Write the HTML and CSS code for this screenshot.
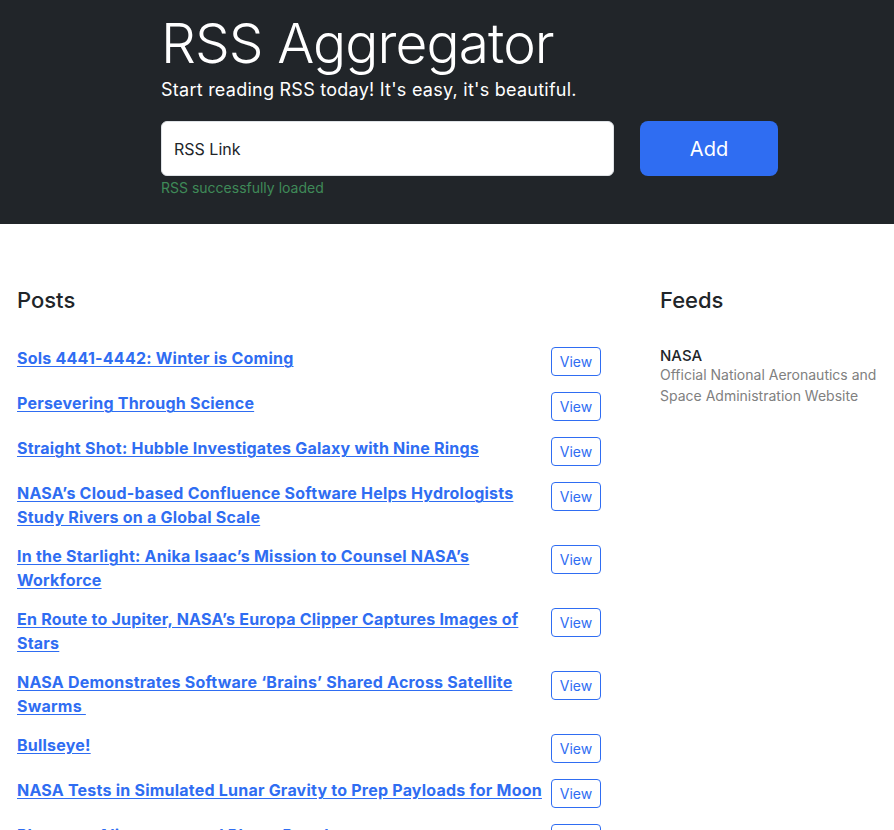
FILE: index.html
```html
<!DOCTYPE html>
<html lang="en">
<head>
<meta charset="utf-8">
<title>RSS Aggregator</title>
<link rel="stylesheet" href="styles.css">
</head>
<body>
<header class="hero">
  <div class="hero-inner">
    <h1 class="title">RSS Aggregator</h1>
    <p class="lead">Start reading RSS today! It's easy, it's beautiful.</p>
    <form class="rss-form">
      <div class="field">
        <input class="input" type="text" placeholder="RSS Link" aria-label="RSS Link">
      </div>
      <button type="button" class="btn-add">Add</button>
    </form>
    <p class="feedback">RSS successfully loaded</p>
  </div>
</header>
<main class="content">
  <section class="posts">
    <h2 class="section-title">Posts</h2>
    <ul class="post-list">
      <li class="post"><a href="#" class="post-link">Sols 4441-4442: Winter is Coming</a><button class="btn-view" type="button">View</button></li>
      <li class="post"><a href="#" class="post-link">Persevering Through Science</a><button class="btn-view" type="button">View</button></li>
      <li class="post"><a href="#" class="post-link">Straight Shot: Hubble Investigates Galaxy with Nine Rings</a><button class="btn-view" type="button">View</button></li>
      <li class="post"><a href="#" class="post-link">NASA’s Cloud-based Confluence Software Helps Hydrologists Study Rivers on a Global Scale</a><button class="btn-view" type="button">View</button></li>
      <li class="post"><a href="#" class="post-link">In the Starlight: Anika Isaac’s Mission to Counsel NASA’s Workforce</a><button class="btn-view" type="button">View</button></li>
      <li class="post"><a href="#" class="post-link">En Route to Jupiter, NASA’s Europa Clipper Captures Images of Stars</a><button class="btn-view" type="button">View</button></li>
      <li class="post"><a href="#" class="post-link">NASA Demonstrates Software ‘Brains’ Shared Across Satellite Swarms&nbsp;</a><button class="btn-view" type="button">View</button></li>
      <li class="post"><a href="#" class="post-link">Bullseye!</a><button class="btn-view" type="button">View</button></li>
      <li class="post"><a href="#" class="post-link">NASA Tests in Simulated Lunar Gravity to Prep Payloads for Moon</a><button class="btn-view" type="button">View</button></li>
      <li class="post"><a href="#" class="post-link">Planetary Alignments and Planet Parades</a><button class="btn-view" type="button">View</button></li>
    </ul>
  </section>
  <aside class="feeds">
    <h2 class="section-title">Feeds</h2>
    <ul class="feed-list">
      <li class="feed">
        <h3 class="feed-title">NASA</h3>
        <p class="feed-desc">Official National Aeronautics and Space Administration Website</p>
      </li>
    </ul>
  </aside>
</main>
</body>
</html>
```
FILE: styles.css
```css
* { box-sizing: border-box; }
html, body { margin: 0; padding: 0; }
body {
  font-family: Inter, "Noto Sans", sans-serif;
  color: #212529;
  background: #fff;
  font-size: 16px;
  line-height: 1.5;
}
.hero {
  background: #212529;
  color: #fff;
  height: 224px;
}
.hero-inner {
  margin-left: 161px;
  width: 617px;
  padding-top: 10px;
}
.title {
  margin: 0;
  font-size: 55px;
  font-weight: 300;
  line-height: 66px;
  letter-spacing: -0.9px;
}
.lead {
  margin: 0 0 18px;
  font-size: 18px;
  font-weight: 400;
  line-height: 27px;
  letter-spacing: 0.25px;
}
.rss-form {
  display: flex;
  gap: 26px;
}
.field { flex: 1; }
.input {
  width: 100%;
  height: 55px;
  border: 1px solid #dee2e6;
  border-radius: 6px;
  padding: 0 12px;
  font: inherit;
  font-size: 16px;
  color: #212529;
  background: #fff;
}
.input::placeholder { color: #212529; }
.btn-add {
  width: 138px;
  height: 55px;
  border: 0;
  border-radius: 8px;
  background: #2f6df2;
  color: #fff;
  font: inherit;
  font-size: 20px;
}
.feedback {
  margin: 2px 0 0;
  font-size: 14px;
  line-height: 20px;
  color: #3f8a58;
}
.content {
  display: flex;
  padding: 0 0 0 17px;
}
.posts {
  width: 584px;
  flex: none;
}
.feeds {
  margin-left: 59px;
  flex: 1;
  padding-right: 8px;
}
.section-title {
  margin: 63px 0 0;
  font-size: 22px;
  font-weight: 500;
  line-height: 1.2;
}
.post-list, .feed-list {
  list-style: none;
  margin: 26px 0 0;
  padding: 0;
}
.post {
  display: flex;
  justify-content: space-between;
  align-items: flex-start;
  gap: 2px;
  padding: 8px 0;
}
.post-link {
  color: #2f6df2;
  font-weight: 700;
  line-height: 23.5px;
  letter-spacing: 0.22px;
  text-decoration: underline;
  text-underline-offset: 2px;
}
.btn-view {
  flex: none;
  width: 50px;
  height: 29px;
  border: 1px solid #2f6df2;
  border-radius: 4px;
  background: #fff;
  color: #2f6df2;
  font: inherit;
  font-size: 14px;
  line-height: 19px;
  padding: 0;
}
.feed { padding: 8px 0; }
.feed-title {
  margin: 0;
  font-size: 15px;
  font-weight: 500;
  line-height: 1.2;
}
.feed-desc {
  margin: 0;
  font-size: 14px;
  line-height: 20.5px;
  color: #808080;
}
```
